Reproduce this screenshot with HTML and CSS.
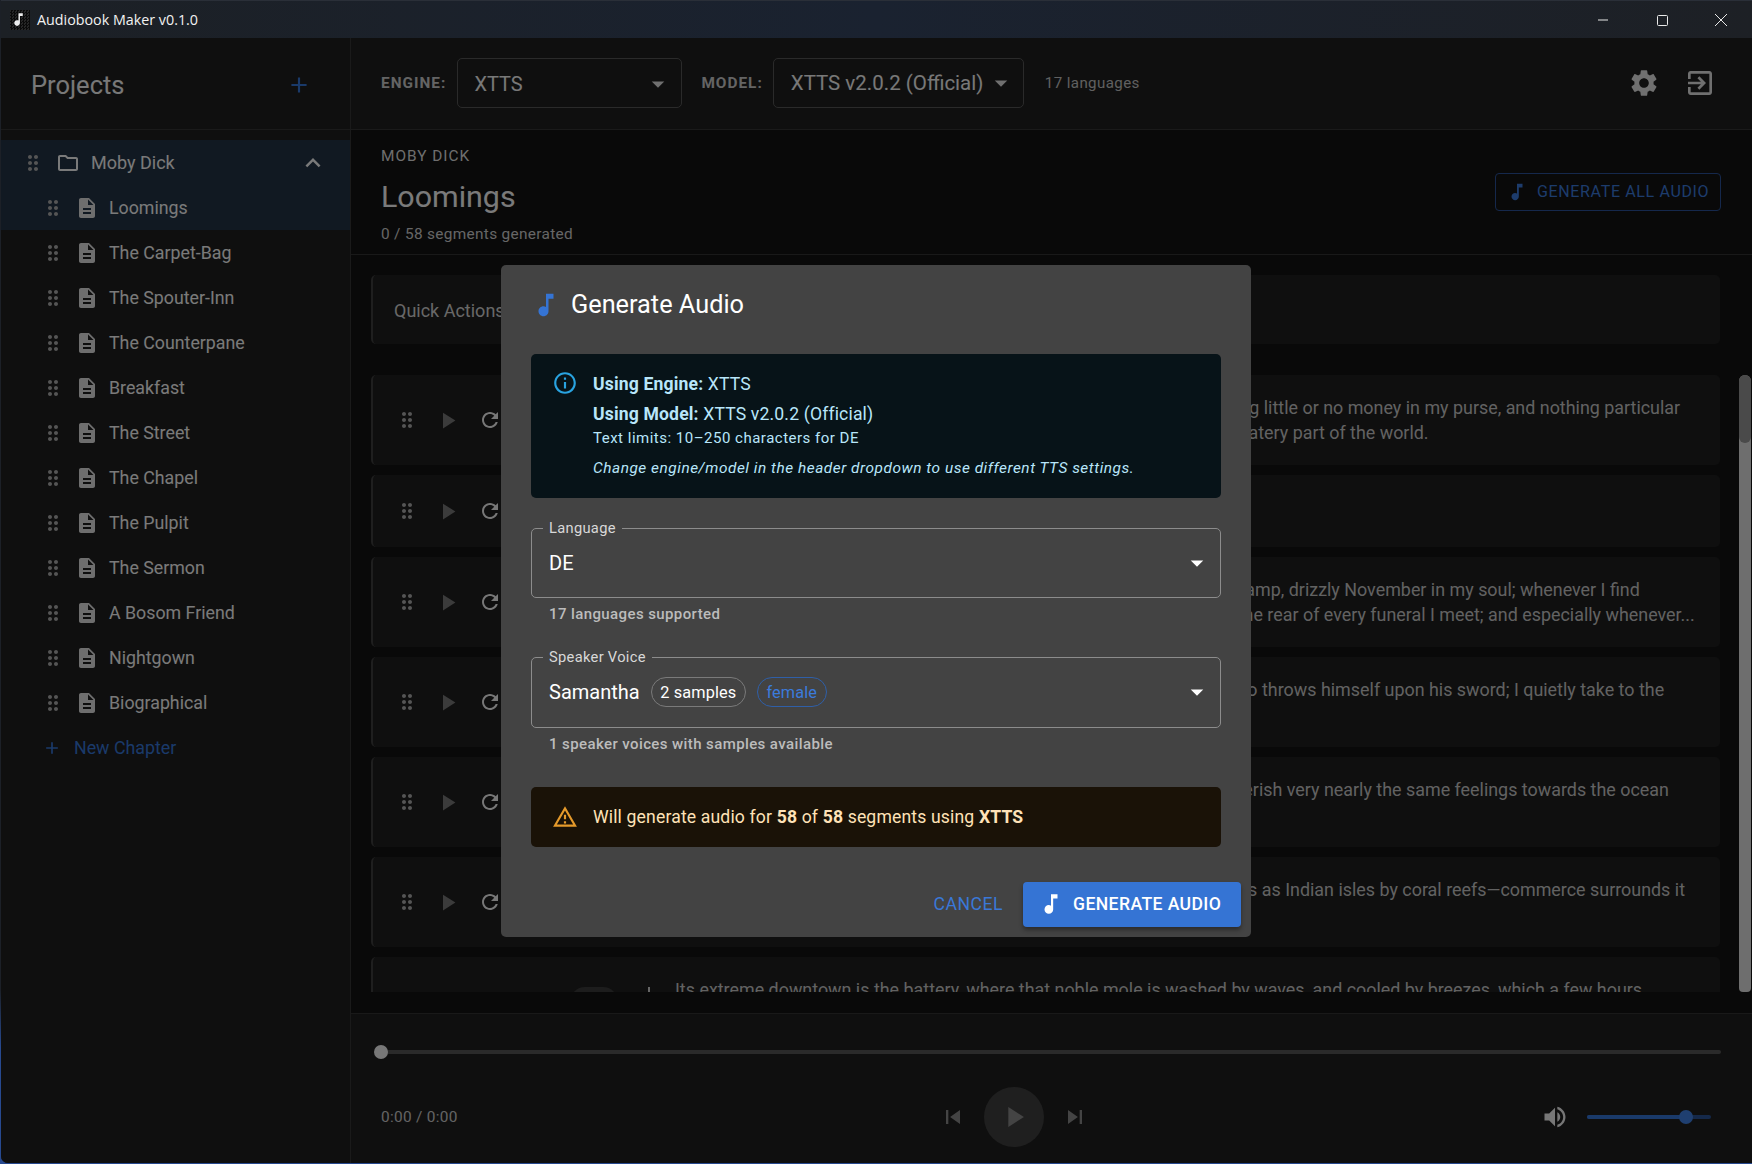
FILE: index.html
```html
<!DOCTYPE html>
<html lang="en">
<head>
    <meta charset="UTF-8">
    <meta name="viewport" content="width=device-width, initial-scale=1.0">
    <title>Audiobook Maker v0.1.0</title>
    <link rel="stylesheet" href="styles.css">
</head>
<body>
    <!-- Icon sprite -->
    <svg class="sprite" xmlns="http://www.w3.org/2000/svg">
        <symbol id="i-note" viewBox="0 0 24 24"><path d="M12 3v10.55c-.59-.34-1.27-.55-2-.55-2.21 0-4 1.79-4 4s1.79 4 4 4 4-1.79 4-4V7h4V3h-6z"/></symbol>
        <symbol id="i-drag" viewBox="0 0 24 24"><path d="M11 18c0 1.1-.9 2-2 2s-2-.9-2-2 .9-2 2-2 2 .9 2 2zm-2-8c-1.1 0-2 .9-2 2s.9 2 2 2 2-.9 2-2-.9-2-2-2zm0-6c-1.1 0-2 .9-2 2s.9 2 2 2 2-.9 2-2-.9-2-2-2zm6 4c1.1 0 2-.9 2-2s-.9-2-2-2-2 .9-2 2 .9 2 2 2zm0 2c-1.1 0-2 .9-2 2s.9 2 2 2 2-.9 2-2-.9-2-2-2zm0 6c-1.1 0-2 .9-2 2s.9 2 2 2 2-.9 2-2-.9-2-2-2z"/></symbol>
        <symbol id="i-doc" viewBox="0 0 24 24"><path d="M14 2H6c-1.1 0-1.99.9-1.99 2L4 20c0 1.1.89 2 1.99 2H18c1.1 0 2-.9 2-2V8l-6-6zm2 16H8v-2h8v2zm0-4H8v-2h8v2zm-3-5V3.5L18.5 9H13z"/></symbol>
        <symbol id="i-folder" viewBox="0 0 24 24"><path d="M9.17 6l2 2H20v10H4V6h5.17M10 4H4c-1.1 0-1.99.9-1.99 2L2 18c0 1.1.9 2 2 2h16c1.1 0 2-.9 2-2V8c0-1.1-.9-2-2-2h-8l-2-2z"/></symbol>
        <symbol id="i-less" viewBox="0 0 24 24"><path d="M12 8l-6 6 1.41 1.41L12 10.83l4.59 4.58L18 14z"/></symbol>
        <symbol id="i-add" viewBox="0 0 24 24"><path d="M19 13h-6v6h-2v-6H5v-2h6V5h2v6h6v2z"/></symbol>
        <symbol id="i-gear" viewBox="0 0 24 24"><path d="M19.14 12.94c.04-.3.06-.61.06-.94 0-.32-.02-.64-.07-.94l2.03-1.58c.18-.14.23-.41.12-.61l-1.92-3.32c-.12-.22-.37-.29-.59-.22l-2.39.96c-.5-.38-1.03-.7-1.62-.94l-.36-2.54c-.04-.24-.24-.41-.48-.41h-3.84c-.24 0-.43.17-.47.41l-.36 2.54c-.59.24-1.13.57-1.62.94l-2.39-.96c-.22-.08-.47 0-.59.22L2.74 8.87c-.12.21-.08.47.12.61l2.03 1.58c-.05.3-.09.63-.09.94s.02.64.07.94l-2.03 1.58c-.18.14-.23.41-.12.61l1.92 3.32c.12.22.37.29.59.22l2.39-.96c.5.38 1.03.7 1.62.94l.36 2.54c.05.24.24.41.48.41h3.84c.24 0 .44-.17.47-.41l.36-2.54c.59-.24 1.13-.56 1.62-.94l2.39.96c.22.08.47 0 .59-.22l1.92-3.32c.12-.22.07-.47-.12-.61l-2.01-1.58zM12 15.6c-1.98 0-3.6-1.62-3.6-3.6s1.62-3.6 3.6-3.6 3.6 1.62 3.6 3.6-1.62 3.6-3.6 3.6z"/></symbol>
        <symbol id="i-exit" viewBox="0 0 24 24"><path d="M10.09 15.59L11.5 17l5-5-5-5-1.41 1.41L12.67 11H3v2h9.67l-2.58 2.59zM19 3H5c-1.11 0-2 .9-2 2v4h2V5h14v14H5v-4H3v4c0 1.1.89 2 2 2h14c1.1 0 2-.9 2-2V5c0-1.1-.9-2-2-2z"/></symbol>
        <symbol id="i-play" viewBox="0 0 24 24"><path d="M8 5v14l11-7z"/></symbol>
        <symbol id="i-refresh" viewBox="0 0 24 24"><path d="M17.65 6.35C16.2 4.9 14.21 4 12 4c-4.42 0-7.99 3.58-7.99 8s3.57 8 7.99 8c3.73 0 6.84-2.55 7.73-6h-2.08c-.82 2.33-3.04 4-5.65 4-3.31 0-6-2.69-6-6s2.69-6 6-6c1.66 0 3.14.69 4.22 1.78L13 11h7V4l-2.35 2.35z"/></symbol>
        <symbol id="i-prev" viewBox="0 0 24 24"><path d="M6 6h2v12H6zm3.5 6l8.5 6V6z"/></symbol>
        <symbol id="i-next" viewBox="0 0 24 24"><path d="M6 18l8.5-6L6 6v12zM16 6v12h2V6h-2z"/></symbol>
        <symbol id="i-volume" viewBox="0 0 24 24"><path d="M3 9v6h4l5 5V4L7 9H3zm13.5 3c0-1.77-1.02-3.29-2.5-4.03v8.05c1.48-.73 2.5-2.25 2.5-4.02zM14 3.23v2.06c2.89.86 5 3.54 5 6.71s-2.11 5.85-5 6.71v2.06c4.01-.91 7-4.49 7-8.77s-2.99-7.86-7-8.77z"/></symbol>
        <symbol id="i-info" viewBox="0 0 24 24"><path d="M11 7h2v2h-2zm0 4h2v6h-2zm1-9C6.48 2 2 6.48 2 12s4.48 10 10 10 10-4.48 10-10S17.52 2 12 2zm0 18c-4.41 0-8-3.59-8-8s3.59-8 8-8 8 3.59 8 8-3.59 8-8 8z"/></symbol>
        <symbol id="i-warn" viewBox="0 0 24 24"><path d="M12 5.99L19.53 19H4.47L12 5.99M12 2L1 21h22L12 2zm1 14h-2v2h2v-2zm0-6h-2v4h2v-4z"/></symbol>
        <symbol id="i-drop" viewBox="0 0 24 24"><path d="M7 10l5 5 5-5z"/></symbol>
    </svg>

    <div class="window">
        <!-- Title bar -->
        <div class="titlebar">
            <div class="app-icon"><svg class="icon"><use href="#i-note"/></svg></div>
            <span class="app-title">Audiobook Maker v0.1.0</span>
            <div class="win-controls">
                <svg width="12" height="12" viewBox="0 0 12 12"><path d="M1 6h10" stroke="#e8e8e8" fill="none"/></svg>
                <svg width="12" height="12" viewBox="0 0 12 12"><rect x="1.5" y="1.5" width="10" height="10" rx="1" stroke="#e8e8e8" fill="none"/></svg>
                <svg width="12" height="12" viewBox="0 0 12 12"><path d="M0 0l12 12M12 0L0 12" stroke="#e8e8e8" fill="none"/></svg>
            </div>
        </div>

        <div class="main">
            <!-- Sidebar -->
            <aside class="sidebar">
                <div class="sidebar-head">
                    <span class="sidebar-title">Projects</span>
                    <svg class="icon add-project"><use href="#i-add"/></svg>
                </div>
                <ul class="tree">
                    <li class="tree-row project-row selected">
                        <svg class="icon handle"><use href="#i-drag"/></svg>
                        <svg class="icon"><use href="#i-folder"/></svg>
                        <span class="grow">Moby Dick</span>
                        <svg class="icon chevron"><use href="#i-less"/></svg>
                    </li>
                    <li class="tree-row selected"><svg class="icon handle"><use href="#i-drag"/></svg><svg class="icon doc"><use href="#i-doc"/></svg><span>Loomings</span></li>
                    <li class="tree-row"><svg class="icon handle"><use href="#i-drag"/></svg><svg class="icon doc"><use href="#i-doc"/></svg><span>The Carpet-Bag</span></li>
                    <li class="tree-row"><svg class="icon handle"><use href="#i-drag"/></svg><svg class="icon doc"><use href="#i-doc"/></svg><span>The Spouter-Inn</span></li>
                    <li class="tree-row"><svg class="icon handle"><use href="#i-drag"/></svg><svg class="icon doc"><use href="#i-doc"/></svg><span>The Counterpane</span></li>
                    <li class="tree-row"><svg class="icon handle"><use href="#i-drag"/></svg><svg class="icon doc"><use href="#i-doc"/></svg><span>Breakfast</span></li>
                    <li class="tree-row"><svg class="icon handle"><use href="#i-drag"/></svg><svg class="icon doc"><use href="#i-doc"/></svg><span>The Street</span></li>
                    <li class="tree-row"><svg class="icon handle"><use href="#i-drag"/></svg><svg class="icon doc"><use href="#i-doc"/></svg><span>The Chapel</span></li>
                    <li class="tree-row"><svg class="icon handle"><use href="#i-drag"/></svg><svg class="icon doc"><use href="#i-doc"/></svg><span>The Pulpit</span></li>
                    <li class="tree-row"><svg class="icon handle"><use href="#i-drag"/></svg><svg class="icon doc"><use href="#i-doc"/></svg><span>The Sermon</span></li>
                    <li class="tree-row"><svg class="icon handle"><use href="#i-drag"/></svg><svg class="icon doc"><use href="#i-doc"/></svg><span>A Bosom Friend</span></li>
                    <li class="tree-row"><svg class="icon handle"><use href="#i-drag"/></svg><svg class="icon doc"><use href="#i-doc"/></svg><span>Nightgown</span></li>
                    <li class="tree-row"><svg class="icon handle"><use href="#i-drag"/></svg><svg class="icon doc"><use href="#i-doc"/></svg><span>Biographical</span></li>
                    <li class="tree-row new-chapter"><svg class="icon"><use href="#i-add"/></svg><span>New Chapter</span></li>
                </ul>
            </aside>

            <!-- Content -->
            <div class="content">
                <header class="topbar">
                    <span class="field-label">ENGINE:</span>
                    <div class="select engine-select"><span>XTTS</span><svg class="icon"><use href="#i-drop"/></svg></div>
                    <span class="field-label model-label">MODEL:</span>
                    <div class="select model-select"><span>XTTS v2.0.2 (Official)</span><svg class="icon"><use href="#i-drop"/></svg></div>
                    <span class="lang-count">17 languages</span>
                    <svg class="icon top-action settings"><use href="#i-gear"/></svg>
                    <svg class="icon top-action"><use href="#i-exit"/></svg>
                </header>

                <section class="chapter-head">
                    <div class="chapter-info">
                        <div class="overline">MOBY DICK</div>
                        <h1 class="chapter-title">Loomings</h1>
                        <div class="chapter-sub">0 / 58 segments generated</div>
                    </div>
                    <button class="btn-outline"><svg class="icon"><use href="#i-note"/></svg>GENERATE ALL AUDIO</button>
                </section>

                <div class="quick-card">Quick Actions</div>

                <div class="segments-wrap">
                    <div class="segments">
                        <div class="segment">
                            <svg class="icon handle"><use href="#i-drag"/></svg>
                            <span class="seg-btn"><svg class="icon seg-play"><use href="#i-play"/></svg></span>
                            <span class="seg-btn"><svg class="icon"><use href="#i-refresh"/></svg></span>
                            <span class="seg-chip"></span>
                            <span class="seg-divider"></span>
                            <p class="seg-text">Call me Ishmael. Some years ago—never mind how long precisely—having little or no money in my purse, and nothing particular to interest me on shore, I thought I would sail about a little and see the watery part of the world.</p>
                        </div>
                        <div class="segment short">
                            <svg class="icon handle"><use href="#i-drag"/></svg>
                            <span class="seg-btn"><svg class="icon seg-play"><use href="#i-play"/></svg></span>
                            <span class="seg-btn"><svg class="icon"><use href="#i-refresh"/></svg></span>
                            <span class="seg-chip"></span>
                            <span class="seg-divider"></span>
                            <p class="seg-text">It is a way I have of driving off the spleen.</p>
                        </div>
                        <div class="segment">
                            <svg class="icon handle"><use href="#i-drag"/></svg>
                            <span class="seg-btn"><svg class="icon seg-play"><use href="#i-play"/></svg></span>
                            <span class="seg-btn"><svg class="icon"><use href="#i-refresh"/></svg></span>
                            <span class="seg-chip"></span>
                            <span class="seg-divider"></span>
                            <p class="seg-text">Whenever I find myself growing grim about the mouth; whenever it is a damp, drizzly November in my soul; whenever I find<br>myself involuntarily pausing before coffin warehouses, and bringing up the rear of every funeral I meet; and especially whenever...</p>
                        </div>
                        <div class="segment">
                            <svg class="icon handle"><use href="#i-drag"/></svg>
                            <span class="seg-btn"><svg class="icon seg-play"><use href="#i-play"/></svg></span>
                            <span class="seg-btn"><svg class="icon"><use href="#i-refresh"/></svg></span>
                            <span class="seg-chip"></span>
                            <span class="seg-divider"></span>
                            <p class="seg-text">This is my substitute for pistol and ball. With a philosophical flourish Cato throws himself upon his sword; I quietly take to the ship.</p>
                        </div>
                        <div class="segment">
                            <svg class="icon handle"><use href="#i-drag"/></svg>
                            <span class="seg-btn"><svg class="icon seg-play"><use href="#i-play"/></svg></span>
                            <span class="seg-btn"><svg class="icon"><use href="#i-refresh"/></svg></span>
                            <span class="seg-chip"></span>
                            <span class="seg-divider"></span>
                            <p class="seg-text">If they but knew it, almost all men in their degree, some time or other, cherish very nearly the same feelings towards the ocean with me.</p>
                        </div>
                        <div class="segment">
                            <svg class="icon handle"><use href="#i-drag"/></svg>
                            <span class="seg-btn"><svg class="icon seg-play"><use href="#i-play"/></svg></span>
                            <span class="seg-btn"><svg class="icon"><use href="#i-refresh"/></svg></span>
                            <span class="seg-chip"></span>
                            <span class="seg-divider"></span>
                            <p class="seg-text">There now is your insular city of the Manhattoes, belted round by wharves as Indian isles by coral reefs—commerce surrounds it with her surf.</p>
                        </div>
                        <div class="segment">
                            <svg class="icon handle"><use href="#i-drag"/></svg>
                            <span class="seg-btn"><svg class="icon seg-play"><use href="#i-play"/></svg></span>
                            <span class="seg-btn"><svg class="icon"><use href="#i-refresh"/></svg></span>
                            <span class="seg-chip"></span>
                            <span class="seg-divider"></span>
                            <p class="seg-text">Its extreme downtown is the battery, where that noble mole is washed by waves, and cooled by breezes, which a few hours previous were out of sight of land.</p>
                        </div>
                    </div>
                    <div class="scrollbar"><div class="scroll-thumb"></div></div>
                </div>

                <footer class="player">
                    <div class="rail"><span class="rail-thumb"></span></div>
                    <div class="player-row">
                        <span class="time">0:00 / 0:00</span>
                        <div class="transport">
                            <svg class="icon skip"><use href="#i-prev"/></svg>
                            <span class="play-btn"><svg class="icon"><use href="#i-play"/></svg></span>
                            <svg class="icon skip"><use href="#i-next"/></svg>
                        </div>
                        <div class="volume">
                            <svg class="icon"><use href="#i-volume"/></svg>
                            <div class="vol-rail"><div class="vol-fill"></div></div>
                        </div>
                    </div>
                </footer>
            </div>
        </div>

        <!-- Generate audio dialog -->
        <div class="backdrop">
            <div class="dialog">
                <div class="dialog-title">
                    <svg class="icon"><use href="#i-note"/></svg>
                    <h2>Generate Audio</h2>
                </div>

                <div class="alert alert-info">
                    <svg class="icon"><use href="#i-info"/></svg>
                    <div>
                        <div class="alert-line"><strong>Using Engine:</strong> XTTS</div>
                        <div class="alert-line second"><strong>Using Model:</strong> XTTS v2.0.2 (Official)</div>
                        <div class="alert-small">Text limits: 10–250 characters for DE</div>
                        <div class="alert-small hint">Change engine/model in the header dropdown to use different TTS settings.</div>
                    </div>
                </div>

                <div class="outlined language-field">
                    <span class="legend">Language</span>
                    <span class="value">DE</span>
                    <svg class="icon"><use href="#i-drop"/></svg>
                </div>
                <div class="helper">17 languages supported</div>

                <div class="outlined speaker-field">
                    <span class="legend">Speaker Voice</span>
                    <span class="value">Samantha</span>
                    <span class="chip">2 samples</span>
                    <span class="chip chip-blue">female</span>
                    <svg class="icon"><use href="#i-drop"/></svg>
                </div>
                <div class="helper">1 speaker voices with samples available</div>

                <div class="alert alert-warn">
                    <svg class="icon"><use href="#i-warn"/></svg>
                    <div>Will generate audio for <strong>58</strong> of <strong>58</strong> segments using <strong>XTTS</strong></div>
                </div>

                <div class="dialog-actions">
                    <button class="btn-text">CANCEL</button>
                    <button class="btn-primary"><svg class="icon"><use href="#i-note"/></svg>GENERATE AUDIO</button>
                </div>
            </div>
        </div>
    </div>
</body>
</html>
```

FILE: styles.css
```css
* {
    box-sizing: border-box;
}

html, body {
    height: 100%;
    margin: 0;
}

body {
    font-family: Roboto, "Liberation Sans", sans-serif;
    background: linear-gradient(#1c2027 85%, #27498f 90%);
    overflow: hidden;
}

.sprite {
    display: none;
}

.icon {
    width: 24px;
    height: 24px;
    fill: currentColor;
    flex: none;
}

.grow {
    flex: 1;
}

.window {
    position: relative;
    display: flex;
    flex-direction: column;
    height: calc(100vh - 1px);
    margin-left: 1px;
    border-radius: 0 0 0 7px;
    overflow: hidden;
    background: #1e1e1e;
    color: #eee;
}

/* Title bar */
.titlebar {
    display: flex;
    align-items: center;
    height: 38px;
    padding-left: 9px;
    background: linear-gradient(90deg, #1c2025, #1a2230 50%, #1d2025);
    border-top: 1px solid #2a2f38;
    flex: none;
}

.app-icon {
    display: flex;
    align-items: center;
    justify-content: center;
    width: 20px;
    height: 20px;
    background: repeating-conic-gradient(#0a0a0a 0 25%, #262626 0 50%) 0 0 / 3px 3px;
    color: #eee;
}

.app-icon .icon {
    width: 17px;
    height: 17px;
    margin-left: -4px;
}

.app-title {
    margin-left: 7px;
    font-family: "Open Sans", sans-serif;
    font-size: 14.3px;
    color: #f2f2f2;
}

.win-controls {
    display: flex;
    gap: 47px;
    margin-left: auto;
    margin-right: 25px;
}

.main {
    display: flex;
    flex: 1;
    min-height: 0;
}

/* Sidebar */
.sidebar {
    width: 350px;
    flex: none;
    background: #1e1e1e;
    border-right: 1px solid #353535;
}

.sidebar-head {
    display: flex;
    align-items: center;
    justify-content: space-between;
    height: 92px;
    padding: 2px 38px 0 30px;
    border-bottom: 1px solid #353535;
}

.sidebar-title {
    font-size: 25.5px;
    color: #f0f0f0;
}

.add-project {
    color: #3574d4;
    width: 26px;
    height: 26px;
}

.tree {
    list-style: none;
    margin: 0;
    padding: 10px 0 0;
}

.tree-row {
    display: flex;
    align-items: center;
    gap: 10px;
    height: 45px;
    padding: 0 22px 0 40px;
    font-size: 17.8px;
    color: #f4f4f4;
}

.tree-row.selected {
    background: #223244;
}

.project-row {
    gap: 11px;
    padding-left: 20px;
    font-size: 18px;
}

.chevron {
    width: 30px;
    height: 30px;
}

.handle {
    color: #aaa;
}

.doc {
    color: #ddd;
}

.new-chapter {
    gap: 12px;
    padding-left: 41px;
    color: #3574d4;
}

.new-chapter .icon {
    width: 20px;
    height: 20px;
}

/* Content */
.content {
    position: relative;
    display: flex;
    flex-direction: column;
    flex: 1;
    min-width: 0;
    background: #121212;
}

.topbar {
    display: flex;
    align-items: center;
    height: 92px;
    padding: 0 36px 1px 30px;
    background: #1e1e1e;
    border-bottom: 1px solid #353535;
    flex: none;
}

.field-label {
    font-size: 15.4px;
    font-weight: 700;
    letter-spacing: 1px;
    color: #c8c8c8;
}

.model-label {
    margin-left: 19px;
}

.select {
    display: flex;
    align-items: center;
    justify-content: space-between;
    height: 50px;
    margin-left: 11px;
    padding: 0 7px 0 17px;
    font-size: 20.5px;
    color: #f0f0f0;
    border: 1px solid #555;
    border-radius: 5px;
}

.engine-select {
    width: 225px;
    padding: 2px 8px 0 16px;
    font-size: 20px;
}

.model-select {
    width: 251px;
    margin-left: 10px;
}

.select .icon {
    width: 30px;
    height: 30px;
    color: #e0e0e0;
}

.lang-count {
    margin-left: 21px;
    font-size: 15.1px;
    letter-spacing: .4px;
    color: #c0c0c0;
}

.top-action {
    width: 32px;
    height: 32px;
    color: #e0e0e0;
    margin-left: 24px;
}

.settings {
    margin-left: auto;
}

.chapter-head {
    display: flex;
    align-items: center;
    justify-content: space-between;
    height: 125px;
    padding: 0 31px 0 30px;
    border-bottom: 1px solid #333;
    flex: none;
}

.chapter-info {
    margin-top: 5px;
}

.overline {
    font-size: 15.4px;
    line-height: 20px;
    letter-spacing: 1px;
    color: #ddd;
}

.chapter-title {
    margin: 12px 0 8px;
    font-size: 30.4px;
    font-weight: 400;
    line-height: 38px;
    color: #f4f4f4;
}

.chapter-sub {
    font-size: 15.4px;
    line-height: 20px;
    letter-spacing: .32px;
    color: #ccc;
}

.btn-outline {
    display: flex;
    align-items: center;
    gap: 9px;
    height: 38px;
    width: 226px;
    margin-top: -1px;
    padding: 0 0 0 10px;
    font: 400 16px Roboto, sans-serif;
    letter-spacing: .65px;
    white-space: nowrap;
    color: #3a78d8;
    background: none;
    border: 1px solid #2a5198;
    border-radius: 4px;
}

.btn-outline .icon {
    width: 22px;
    height: 22px;
}

.quick-card {
    display: flex;
    align-items: center;
    height: 69px;
    margin: 20px 32px 0 20px;
    padding: 1px 0 0 21px;
    font-size: 18px;
    color: #d0d0d0;
    background: #1e1e1e;
    border-left: 2px solid #3e3e3e;
    border-radius: 5px;
    flex: none;
}

.segments-wrap {
    display: flex;
    flex: 1;
    min-height: 0;
    margin: 31px 1px 21px 20px;
}

.segments {
    flex: 1;
    min-width: 0;
    overflow: hidden;
    padding-right: 19px;
}

.segment {
    display: flex;
    align-items: center;
    min-height: 72px;
    margin-bottom: 10px;
    padding-left: 22px;
    background: #1e1e1e;
    border-left: 2px solid #3e3e3e;
    border-radius: 5px;
}

.seg-btn {
    display: flex;
    align-items: center;
    justify-content: center;
    width: 40px;
    height: 40px;
    flex: none;
    color: #eee;
}

.segment .handle {
    margin-right: 8px;
}

.seg-btn:has(.seg-play) {
    margin-right: 3px;
}

.seg-play {
    color: #777;
    width: 27px;
    height: 27px;
}

.seg-chip {
    width: 48px;
    height: 30px;
    margin-left: 60px;
    border-radius: 15px;
    background: #3a3a3a;
    flex: none;
}

.seg-divider {
    width: 2px;
    height: 30px;
    margin-left: 30px;
    background: #ccc;
    flex: none;
}

.seg-text {
    flex: 1;
    align-self: flex-start;
    margin: 21px 22px 20px 25px;
    font-size: 17.9px;
    line-height: 24.5px;
    color: #c4c4c4;
    display: -webkit-box;
    -webkit-box-orient: vertical;
    -webkit-line-clamp: 2;
    overflow: hidden;
}

.scrollbar {
    width: 12px;
    background: #dcdcdc;
    border-radius: 6px 6px 4px 4px;
    flex: none;
}

.scroll-thumb {
    height: 68px;
    background: #949494;
    border-radius: 6px;
}

/* Player */
.player {
    height: 150px;
    padding: 36px 31px 0 30px;
    background: #1e1e1e;
    border-top: 1px solid #333;
    flex: none;
}

.rail {
    position: relative;
    height: 4px;
    background: #555;
    border-radius: 2px;
}

.rail-thumb {
    position: absolute;
    left: -7px;
    top: -5px;
    width: 14px;
    height: 14px;
    border-radius: 50%;
    background: #eee;
}

.player-row {
    display: flex;
    align-items: center;
    margin-top: 33px;
}

.time {
    width: 560px;
    font-size: 15.4px;
    letter-spacing: .3px;
    color: #c8c8c8;
    flex: none;
}

.transport {
    display: flex;
    align-items: center;
    gap: 5px;
    width: 146px;
    justify-content: center;
    color: #888;
}

.skip {
    width: 28px;
    height: 28px;
    color: #888;
}

.play-btn {
    display: flex;
    align-items: center;
    justify-content: center;
    width: 60px;
    height: 60px;
    margin: 0 12px;
    border-radius: 50%;
    background: #3e3e3e;
    color: #888;
    flex: none;
}

.play-btn .icon {
    width: 34px;
    height: 34px;
}

.volume {
    display: flex;
    align-items: center;
    gap: 18px;
    margin-left: auto;
    padding-right: 10px;
    color: #eee;
}

.volume .icon {
    width: 28px;
    height: 28px;
}

.vol-rail {
    position: relative;
    width: 124px;
    height: 4px;
    background: #2b5294;
    border-radius: 2px;
}

.vol-fill {
    position: relative;
    width: 80%;
    height: 4px;
    background: #3574d4;
    border-radius: 2px;
}

.vol-fill::after {
    content: "";
    position: absolute;
    right: -7px;
    top: -5px;
    width: 14px;
    height: 14px;
    border-radius: 50%;
    background: #3f7fe0;
}

/* Dialog */
.backdrop {
    position: absolute;
    inset: 38px 0 0 0;
    display: flex;
    align-items: center;
    justify-content: center;
    background: rgba(0, 0, 0, .5);
}

.dialog {
    width: 750px;
    margin-left: -1px;
    padding: 24px 30px 10px;
    background: #434343;
    border-radius: 5px;
    color: #fff;
}

.dialog-title {
    display: flex;
    align-items: center;
    gap: 10px;
    height: 32px;
}

.dialog-title .icon {
    width: 30px;
    height: 30px;
    color: #3574d4;
}

.dialog-title h2 {
    margin: 0;
    font-size: 25.3px;
    font-weight: 400;
}

.alert {
    display: flex;
    border-radius: 5px;
}

.alert-info {
    gap: 15px;
    height: 144px;
    margin-top: 33px;
    padding: 16px 21px;
    background: #071318;
    color: #b8e6fa;
}

.alert-info .icon {
    width: 26px;
    height: 26px;
    color: #29a3e0;
}

.alert-line {
    margin-top: 1px;
    font-size: 17.6px;
    line-height: 26px;
    letter-spacing: .15px;
}

.alert-line.second {
    margin: 4px 0 1px;
}

.alert strong {
    font-weight: 700;
}

.alert-small {
    font-size: 15px;
    line-height: 20px;
    letter-spacing: .5px;
}

.alert-small.hint {
    margin-top: 10px;
    font-size: 15.4px;
    letter-spacing: .53px;
    font-style: italic;
}

.outlined {
    position: relative;
    display: flex;
    align-items: center;
    gap: 11px;
    height: 70px;
    margin-top: 30px;
    padding: 0 8px 0 17px;
    border: 1px solid #8c8c8c;
    border-radius: 5px;
}

.speaker-field {
    height: 71px;
    margin-top: 33px;
}

.legend {
    position: absolute;
    top: -11px;
    left: 11px;
    padding: 0 6px;
    font-size: 14.7px;
    line-height: 20px;
    letter-spacing: .3px;
    color: #d8d8d8;
    background: #434343;
}

.value {
    font-size: 20px;
    color: #fff;
}

.language-field .value {
    flex: 1;
}

.outlined > .icon {
    margin-left: auto;
    width: 30px;
    height: 30px;
}

.chip {
    display: flex;
    align-items: center;
    height: 30px;
    padding: 0 8.5px;
    font-size: 16.3px;
    letter-spacing: .15px;
    border: 1px solid #7a7a7a;
    border-radius: 15px;
}

.chip-blue {
    color: #3b7bdc;
    border-color: #2f5fa8;
}

.helper {
    margin-top: 6px;
    padding-left: 18px;
    font-size: 15px;
    font-weight: 500;
    line-height: 20px;
    letter-spacing: .4px;
    color: #bcbcbc;
}

.alert-warn {
    align-items: center;
    gap: 15px;
    height: 60px;
    margin-top: 33px;
    padding: 0 21px;
    font-size: 17.6px;
    letter-spacing: .15px;
    background: #1a1207;
    color: #ffe2b7;
}

.alert-warn .icon {
    width: 26px;
    height: 26px;
    color: #e59a2b;
}

.dialog-actions {
    display: flex;
    align-items: center;
    justify-content: flex-end;
    gap: 20px;
    margin: 35px -20px 0 0;
}

.btn-text {
    padding: 0;
    font: 400 17.6px Roboto, sans-serif;
    letter-spacing: .5px;
    color: #3a78d8;
    background: none;
    border: none;
}

.btn-primary {
    display: flex;
    align-items: center;
    gap: 9px;
    height: 45px;
    width: 218px;
    padding: 0 0 0 15px;
    font: 500 17.6px Roboto, sans-serif;
    letter-spacing: .4px;
    color: #fff;
    background: #3574d4;
    border: none;
    border-radius: 4px;
    box-shadow: 0 3px 4px rgba(0, 0, 0, .35);
    white-space: nowrap;
}

.btn-primary .icon {
    width: 26px;
    height: 26px;
}
```
